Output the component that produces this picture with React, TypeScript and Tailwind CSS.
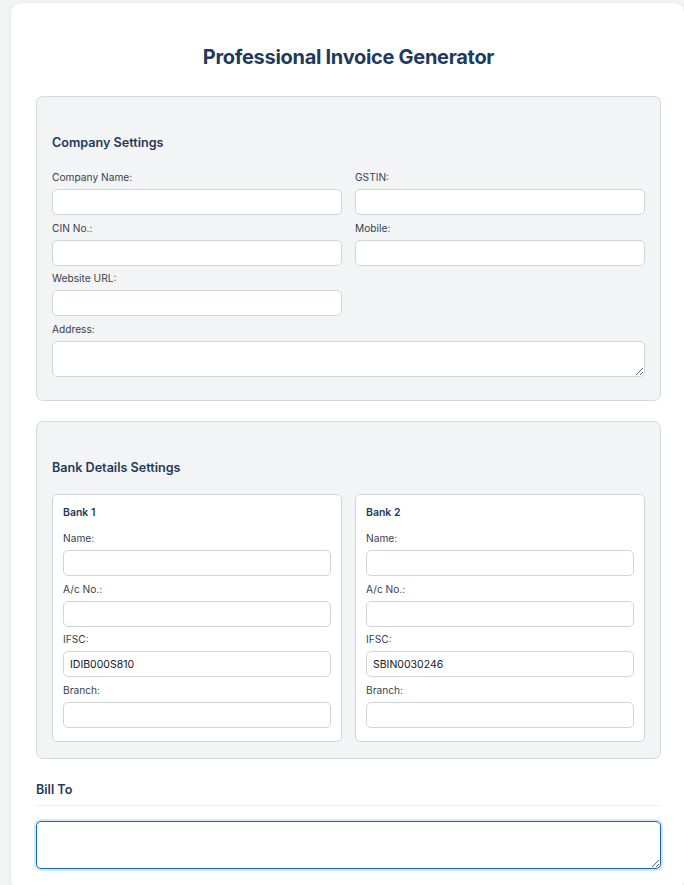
import React from "react";

const font = { fontFamily: "Inter, 'Noto Sans', sans-serif" };

function Field({
  label,
  value,
  className = "",
}: {
  label: string;
  value?: string;
  className?: string;
}) {
  return (
    <div className={className}>
      <label className="block text-[10.2px] leading-[13px] text-[#374151] mb-[5px]">{label}</label>
      <input
        readOnly
        defaultValue={value}
        className="block w-full h-[26px] px-[6px] text-[10.5px] text-[#111827] bg-white border border-[#d1d5db] rounded-[5px] outline-none"
      />
    </div>
  );
}

function BankCard({ title, ifsc }: { title: string; ifsc: string }) {
  return (
    <div className="bg-white border border-[#d1d5db] rounded-[5px] px-[10px] pt-[11px] pb-[13px]">
      <h4 className="text-[10.5px] leading-[14px] font-semibold text-[#1f3a5c] mb-[12px]">{title}</h4>
      <div className="flex flex-col gap-[6.67px]">
        <Field label="Name:" />
        <Field label="A/c No.:" />
        <Field label="IFSC:" value={ifsc} />
        <Field label="Branch:" />
      </div>
    </div>
  );
}

export default function App() {
  return (
    <div className="min-h-screen bg-[#f3f4f6] pt-[3px] overflow-hidden" style={font}>
      <div className="ml-[11px] w-[673px] bg-white rounded-[10px] shadow-[0_1px_6px_rgba(0,0,0,0.06)] pl-[25px] pr-[23px] pt-[42px] pb-[20px]">
        <h1 className="text-center text-[20px] leading-[24px] font-bold text-[#1f3a5c] tracking-[-0.3px]">
          Professional Invoice Generator
        </h1>

        {/* Company settings */}
        <section className="mt-[27px] bg-[#f3f4f6] border border-[#d5d9df] rounded-[7px] px-[15px] pt-[38px] pb-[23px]">
          <h3 className="text-[12.6px] leading-[16px] font-semibold text-[#1f3a5c] mb-[20px]">Company Settings</h3>
          <div className="grid grid-cols-2 gap-x-[13px] gap-y-[6.67px]">
            <Field label="Company Name:" />
            <Field label="GSTIN:" />
            <Field label="CIN No.:" />
            <Field label="Mobile:" />
            <Field label="Website URL:" />
            <div />
            <div className="col-span-2">
              <label className="block text-[10.2px] leading-[13px] text-[#374151] mb-[5px]">Address:</label>
              <textarea
                readOnly
                className="block w-full h-[36px] px-[6px] text-[11px] bg-white border border-[#d1d5db] rounded-[5px] outline-none resize-y"
              />
            </div>
          </div>
        </section>

        {/* Bank details */}
        <section className="mt-[20px] bg-[#f3f4f6] border border-[#d5d9df] rounded-[7px] px-[15px] pt-[38px] pb-[16px]">
          <h3 className="text-[12.6px] leading-[16px] font-semibold text-[#1f3a5c] mb-[18px]">Bank Details Settings</h3>
          <div className="grid grid-cols-2 gap-x-[13px]">
            <BankCard title="Bank 1" ifsc="IDIB000S810" />
            <BankCard title="Bank 2" ifsc="SBIN0030246" />
          </div>
        </section>

        {/* Bill to */}
        <div className="mt-[23px]">
          <h3 className="text-[12.6px] leading-[16px] font-semibold text-[#1f3a5c] pb-[7px] border-b border-[#eef0f2]">Bill To</h3>
          <textarea
            autoFocus
            className="mt-[15px] block w-full h-[48px] px-[8px] py-[4px] text-[12px] bg-white border-[1.5px] border-[#0b66d4] rounded-[5px] outline-none ring-2 ring-[#0b66d4]/15 resize-y"
          />
        </div>
      </div>
    </div>
  );
}
